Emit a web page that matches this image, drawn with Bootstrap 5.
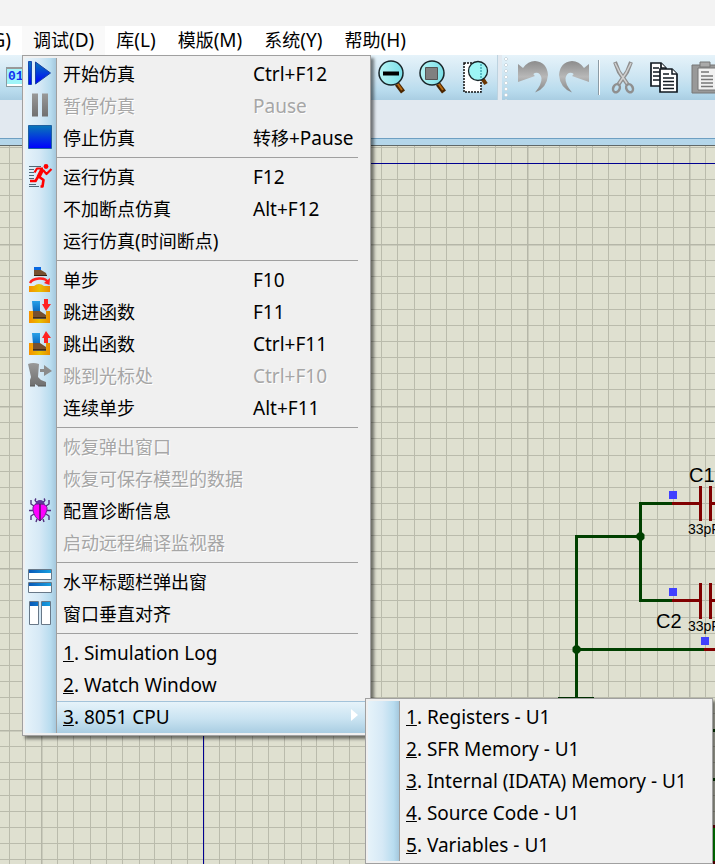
<!DOCTYPE html>
<html lang="zh-CN">
<head>
<meta charset="utf-8">
<meta name="viewport" content="width=device-width, initial-scale=1">
<title>调试</title>
<link href="https://cdn.jsdelivr.net/npm/bootstrap@5.3.0/dist/css/bootstrap.min.css" rel="stylesheet">
<style>
body{font-family:"Noto Sans","Noto Sans CJK SC",sans-serif;font-size:18px;line-height:32px;color:#000;background:#f3f3f3}
button{color:inherit;font:inherit;border:0;background:none;padding:0}
.latin{font-size:19px}
.app-title{height:26px}
.app-menubar{height:29px;background:#fff}
.menu-top{padding:0 11px;line-height:29px;white-space:nowrap}
.menu-top.open{background:#f9f9f9}
.menu-cut{width:22px;padding:0 11px 0 0}
.app-tools{height:45px;gap:4px;background:#e2e9f0}
.tool-strip{background:linear-gradient(#e6f3fa,#c9e3f1 55%,#b8dbed 80%,#a9cde2)}
.strip-main{flex:0 0 498px;padding-right:2px;border-right:1px solid #bdd3e0}
.strip-edit{min-width:0}
.tool{line-height:0;padding:4px 0 5px;flex:none}
.tool-bin{padding:0 0 2px 6px;line-height:0}
.grip{flex:none;width:4px;margin:0 4px 0 2px;background:radial-gradient(circle at 2px 2px,#fff 1px,#a9bfcc 2px,transparent 2px) 0 2px/4px 6px}
.tool-rule{flex:none;width:1px;margin:5px 4px;background:#8c9ba5;box-shadow:1px 0 #fff}
.dock{height:38px;background:#e2e9f0}
.splitter{height:8px;border-top:1px solid #6d9fc2;border-bottom:1px solid #606868;background:#b4d6ea}
.sheet{background:#dfe0d0;min-height:0}
.pop{position:absolute;z-index:5;background-color:#f0f0f0;border:1px solid #a0a0a0;box-shadow:3px 3px 3px rgba(0,0,0,.5);padding:2px}
.pop-main{left:22px;top:55px;width:349px}
.pop-sub{left:365px;top:698px;width:348px;z-index:6}
.pop-list{list-style:none;margin:0;padding:0;background:linear-gradient(90deg,#e6f3fa,#d6e9f6 45%,#b8dcef 80%,#a5c8dd 31px,#a0a0a0 31px) left/32px 100% no-repeat}
.pop-item{height:32px;width:100%;text-align:left}
.pop-icon{width:32px;height:32px;padding:0 0 0 3px;line-height:0;flex:none}
.pop-label{padding-left:6px;white-space:nowrap}
.pop-key{width:115px;flex:none}
.pop-item:disabled{color:#a6a6a6;text-shadow:1px 1px #fff}
.pop-rule{height:7px;margin:0 10px 0 32px;padding-top:3px}
.pop-rule::before{content:"";display:block;height:1px;background:#a0a0a0}
.pop-hot .pop-label{border-top:1px solid #a3c3da;background:linear-gradient(#e6f3fa,#c9e3f1 55%,#a9cde2);line-height:31px}
</style>
<script src="https://cdn.jsdelivr.net/npm/bootstrap@5.3.0/dist/js/bootstrap.bundle.min.js"></script>
</head>
<body class="vh-100 overflow-hidden d-flex flex-column position-relative">
<svg width="0" height="0" class="position-absolute" aria-hidden="true">
<defs>
<linearGradient id="blue" x2="0" y2="1"><stop stop-color="#0878b8"/><stop offset="1" stop-color="#0000ff"/></linearGradient>
<linearGradient id="grey" x2="0" y2="1"><stop stop-color="#999"/><stop offset="1" stop-color="#707070"/></linearGradient>
<linearGradient id="silver" x2="0" y2="1"><stop stop-color="#8c8c8c"/><stop offset=".5" stop-color="#b8b8b8"/><stop offset="1" stop-color="#858585"/></linearGradient>
<linearGradient id="lens"><stop stop-color="#b8f5f5"/><stop offset="1" stop-color="#7adfe8"/></linearGradient>
<linearGradient id="gold"><stop stop-color="#f79000"/><stop offset=".5" stop-color="#e8c000"/><stop offset="1" stop-color="#e88a00"/></linearGradient>
<linearGradient id="leg" x2="0" y2="1"><stop stop-color="#28a0e8"/><stop offset="1" stop-color="#0868c0"/></linearGradient>
<linearGradient id="capbar"><stop stop-color="#0858b8"/><stop offset="1" stop-color="#18a0e0"/></linearGradient>
</defs>
</svg>
<header class="app-title flex-shrink-0"></header>
<nav class="app-menubar d-flex flex-shrink-0" aria-label="菜单栏">
<button class="menu-top menu-cut d-flex justify-content-end overflow-hidden"><span class="latin">(G)</span></button>
<button class="menu-top open">调试<span class="latin">(D)</span></button>
<button class="menu-top">库<span class="latin">(L)</span></button>
<button class="menu-top">模版<span class="latin">(M)</span></button>
<button class="menu-top">系统<span class="latin">(Y)</span></button>
<button class="menu-top">帮助<span class="latin">(H)</span></button>
</nav>
<div class="app-tools d-flex flex-shrink-0 overflow-hidden">
<div class="tool-strip strip-main d-flex">
<button class="tool-bin" aria-label="01"><svg width="30" height="24"><rect x=".5" y="2.500" width="29" height="19" fill="#fff" stroke="#8a9aa0"/><path d="M1 4h28v15H1z" fill="#9ff4f8"/><path d="M1 3h28" stroke="#999" stroke-width="2"/><text x="2" y="15" font-family="Liberation Mono" font-weight="700" font-size="13" fill="#1030f0">01</text></svg></button>
<button class="tool ms-auto" aria-label="缩小"><svg width="41" height="36"><path d="M25 25l6 8" stroke="#4a2500" stroke-width="5"/><path d="M25 24l5 7" stroke="#b86a10" stroke-width="2"/><circle cx="19" cy="14" r="12" fill="url(#lens)" stroke="#182428" stroke-width="1.500"/><path d="M11 14.500h16" stroke="#000" stroke-width="4"/></svg></button>
<button class="tool" aria-label="适合"><svg width="41" height="36"><path d="M25 25l6 8" stroke="#4a2500" stroke-width="5"/><path d="M25 24l5 7" stroke="#b86a10" stroke-width="2"/><circle cx="19" cy="14" r="12" fill="url(#lens)" stroke="#182428" stroke-width="1.500"/><path d="M12.500 8.500h12v12h-12z" fill="#808080" stroke="#555"/></svg></button>
<button class="tool" aria-label="区域"><svg width="41" height="36"><path d="M10 4h17v29H10z" fill="#fff" stroke="#111" stroke-width="1.500" stroke-dasharray="2 1"/><path d="M28 19l4 6" stroke="#6a3500" stroke-width="4"/><circle cx="24" cy="12" r="9.500" fill="#9df5f5" stroke="#182428" stroke-width="1.300"/><path d="M27 5v15" stroke="#178898" stroke-dasharray="2 1"/></svg></button>
</div>
<div class="tool-strip strip-edit d-flex flex-grow-1 overflow-hidden">
<span class="grip"></span>
<button class="tool" aria-label="撤销"><svg width="41" height="36"><path d="M6 5L11 9Q16 2 23 2Q35 3 36 16Q35 29 23 33.500Q30 25 29.500 19Q28 13 23 14Q20 15 23 17L6 23Z" fill="url(#silver)"/></svg></button>
<button class="tool" aria-label="重做"><svg width="41" height="36"><path transform="translate(42 0) scale(-1 1)" d="M6 5L11 9Q16 2 23 2Q35 3 36 16Q35 29 23 33.500Q30 25 29.500 19Q28 13 23 14Q20 15 23 17L6 23Z" fill="url(#silver)"/></svg></button>
<span class="tool-rule"></span>
<button class="tool" aria-label="剪切"><svg width="41" height="36"><g fill="none" stroke="#8f8f8f"><path d="M12 3l4 10 9 13M28 3l-4 10-9 13" stroke-width="4"/><path d="M12 4l5 10 8 12M28 4l-5 10-8 12" stroke="#d0d0d0" stroke-width="1.500"/><ellipse cx="13.500" cy="29" rx="3.200" ry="4.200" stroke-width="2.500" transform="rotate(25 13 29)"/><ellipse cx="26.500" cy="29" rx="3.200" ry="4.200" stroke-width="2.500" transform="rotate(-25 27 29)"/></g></svg></button>
<button class="tool" aria-label="复制"><svg width="41" height="36"><g fill="#fff" stroke="#101820" stroke-width="1.700"><path d="M7 4h10l5 5v18H7z"/><path d="M17 4v5h5M9 9h6M9 13h8M9 17h8M9 21h8" /><path d="M16 10h12l5 5v18H16z"/><path d="M28 10v5h5M19 15h6M19 19h11M19 22.500h11M19 26h11M19 29.500h11" stroke-width="1.500"/></g></svg></button>
<button class="tool" aria-label="粘贴"><svg width="41" height="36"><path d="M7 6h27v28H7z" fill="#999" stroke="#777"/><path d="M15 3h10v5H15z" fill="#aaa" stroke="#777"/><path d="M13 9h20v22H13z" fill="#f1f1f1" stroke="#777"/><path d="M16 13h8M16 17h12M16 20.500h12M16 24h12M16 27.500h12" stroke="#777" stroke-width="1.500"/></svg></button>
</div>
</div>
<div class="dock flex-shrink-0"></div>
<div class="splitter flex-shrink-0"></div>
<main class="sheet flex-grow-1 overflow-hidden">
<svg width="100%" height="100%" class="d-block" role="img" aria-label="原理图">
<defs><pattern id="grid" x="41" y="82" width="162" height="162" patternUnits="userSpaceOnUse">
<path d="M16.500 0v162M32.500 0v162M49.500 0v162M65.500 0v162M81.500 0v162M98.500 0v162M113.500 0v162M130.500 0v162M146.500 0v162M0 16.500h162M0 32.500h162M0 49.500h162M0 65.500h162M0 81.500h162M0 97.500h162M0 113.500h162M0 129.500h162M0 145.500h162" stroke="#babbac"/>
<path d="M0 0h162v1.500H1.500V162H0z" fill="#b5b6a8"/>
</pattern></defs>
<g transform="translate(0 -146)">
<rect width="4000" height="4000" fill="url(#grid)"/>
<path d="M4000 163.500H203.500V4000" fill="none" stroke="#000090"/>
<g fill="none" stroke-width="3">
<path d="M576.500 697V536.500H640.500M672 503.500H640.500V600.500H672M576.500 649.500H704M712 730.500h20M712 779.500h20" stroke="#004000"/>
<path d="M672 503.500h28M710 503.500h30M672 600.500h28M710 600.500h30M704 649.500h40M700.500 486v35M710.500 486v35M700.500 583v36M710.500 583v36" stroke="#800000"/>
</g>
<path d="M558 697.500h36" stroke="#003000"/>
<path d="M636.500 534.500l2-2h4l2 2v4l-2 2h-4l-2-2zM572.500 647.500l2-2h4l2 2v4l-2 2h-4l-2-2z" fill="#004000"/>
<path d="M669 491h8v8h-8zM669 588h8v8h-8zM701 637h8v8h-8z" fill="#4040ff"/>
<path d="M712 825h30v39h-30z" fill="#800000"/><path d="M712 828h30v33h-30z" fill="#00b000"/>
<g font-family="Liberation Sans,sans-serif" fill="#000"><text x="689" y="482" font-size="20">C1</text><text x="656" y="628" font-size="20">C2</text><text x="688" y="534" font-size="14">33pF</text><text x="688" y="631" font-size="14">33pF</text></g>
</g>
</svg>
</main>

<div class="pop pop-main">
<ul class="pop-list">
<li><button class="pop-item d-flex"><span class="pop-icon"><svg width="28" height="32"><path d="M.5 3.500h3v23h-3z" fill="url(#blue)" stroke="#1848b0"/><path d="M7.500 4v22l15-11z" fill="url(#blue)" stroke="#1840a0"/></svg></span><span class="pop-label flex-grow-1">开始仿真</span><span class="pop-key latin">Ctrl+F12</span></button></li>
<li><button class="pop-item d-flex" disabled><span class="pop-icon"><svg width="28" height="32"><path d="M4 3.500h6v23H4zM14 3.500h6v23h-6z" fill="url(#grey)"/></svg></span><span class="pop-label flex-grow-1">暂停仿真</span><span class="pop-key latin">Pause</span></button></li>
<li><button class="pop-item d-flex"><span class="pop-icon"><svg width="28" height="32"><path d="M.5 3.500h23v23H.5z" fill="url(#blue)" stroke="#2060a0"/></svg></span><span class="pop-label flex-grow-1">停止仿真</span><span class="pop-key">转移<span class="latin">+Pause</span></span></button></li>
<li class="pop-rule"></li>
<li><button class="pop-item d-flex"><span class="pop-icon"><svg width="28" height="32"><path d="M1 5.500h12M1 8.500h5M1 11.500h5M1 14.500h5M1 17.500h5M1 23.500h7M1 25.500h10" stroke="#506878" stroke-width="1.200"/><g fill="none" stroke="#f00" stroke-linejoin="round"><path d="M14.500 8l-4 8" stroke-width="4"/><path d="M15 7.500H9l-2.500 4M15 9l3.500 4 5-5" stroke-width="2.200"/><path d="M10.500 15l-3 5H2M10 15l5.500 4-1 6.500h-2" stroke-width="2.600"/></g><circle cx="18" cy="5.500" r="2.400" fill="#f00"/></svg></span><span class="pop-label flex-grow-1">运行仿真</span><span class="pop-key latin">F12</span></button></li>
<li><button class="pop-item d-flex"><span class="pop-icon"></span><span class="pop-label flex-grow-1">不加断点仿真</span><span class="pop-key latin">Alt+F12</span></button></li>
<li><button class="pop-item d-flex"><span class="pop-icon"></span><span class="pop-label flex-grow-1">运行仿真<span class="latin">(</span>时间断点<span class="latin">)</span></span></button></li>
<li class="pop-rule"></li>
<li><button class="pop-item d-flex"><span class="pop-icon"><svg width="28" height="32"><path d="M6 3h7v3H6z" fill="#0868e0"/><path d="M6 6h7l5 3 1 3H6z" fill="#765030"/><path d="M6 11.500h13" stroke="#302010"/><path d="M2 19q2-4 9-4.500t9 4" fill="none" stroke="#f22" stroke-width="2.500"/><path d="M22 14l-.5 7-5.500-2z" fill="#f22"/><path d="M1 22h5q5-4 10 0h6v6H1z" fill="url(#gold)"/></svg></span><span class="pop-label flex-grow-1">单步</span><span class="pop-key latin">F10</span></button></li>
<li><button class="pop-item d-flex"><span class="pop-icon"><svg width="28" height="32"><path d="M1 15h4v8h13v-8h4v12H1z" fill="url(#gold)"/><path d="M4 5h8v11H5z" fill="url(#leg)"/><path d="M5 15h7l6 4v3H5z" fill="#765030"/><path d="M5 22h13" stroke="#302010" stroke-width="1.500"/><path d="M16 3h4v5h3l-5 7-4-7h2z" fill="#f22"/></svg></span><span class="pop-label flex-grow-1">跳进函数</span><span class="pop-key latin">F11</span></button></li>
<li><button class="pop-item d-flex"><span class="pop-icon"><svg width="28" height="32"><path d="M1 15h4v8h13v-8h4v12H1z" fill="url(#gold)"/><path d="M4 5h8v11H5z" fill="url(#leg)"/><path d="M5 15h7l6 4v3H5z" fill="#765030"/><path d="M5 22h13" stroke="#302010" stroke-width="1.500"/><path d="M16 15h4v-5h3l-5-7-4 7h2z" fill="#f22"/></svg></span><span class="pop-label flex-grow-1">跳出函数</span><span class="pop-key latin">Ctrl+F11</span></button></li>
<li><button class="pop-item d-flex" disabled><span class="pop-icon"><svg width="28" height="32"><path d="M0 4q5-2 11 0l-1 13 3 3 5 2v4h-8l-3-2v2H2v-6l1-3z" fill="url(#grey)"/><path d="M2 26h5M10 26h8" stroke="#555"/><path d="M12 9h4V5l8 6-8 5v-4h-4z" fill="#8b8b8b"/></svg></span><span class="pop-label flex-grow-1">跳到光标处</span><span class="pop-key latin">Ctrl+F10</span></button></li>
<li><button class="pop-item d-flex"><span class="pop-icon"></span><span class="pop-label flex-grow-1">连续单步</span><span class="pop-key latin">Alt+F11</span></button></li>
<li class="pop-rule"></li>
<li><button class="pop-item d-flex" disabled><span class="pop-icon"></span><span class="pop-label flex-grow-1">恢复弹出窗口</span></button></li>
<li><button class="pop-item d-flex" disabled><span class="pop-icon"></span><span class="pop-label flex-grow-1">恢复可保存模型的数据</span></button></li>
<li><button class="pop-item d-flex"><span class="pop-icon"><svg width="28" height="32"><g fill="none" stroke="#503080" stroke-width="1.400"><path d="M9 7Q6 6 8 3.500M15 7q3-1 1-3.500M6 11L3 9V5M18 11l3-2V5M5 15.500H1M19 15.500h4M6 19l-3 2v4M18 19l3 2v4M9 24l-1 3M15 24l1 3"/></g><path d="M7 10Q8 5 12 5t5 5z" fill="#60389a"/><path d="M12 9q8 0 7 6t-7 11q-6-4-7-11t7-6z" fill="#f0f" stroke="#702090"/><path d="M12 9v17" stroke="#501060" stroke-width="1.500"/></svg></span><span class="pop-label flex-grow-1">配置诊断信息</span></button></li>
<li><button class="pop-item d-flex" disabled><span class="pop-icon"></span><span class="pop-label flex-grow-1">启动远程编译监视器</span></button></li>
<li class="pop-rule"></li>
<li><button class="pop-item d-flex"><span class="pop-icon"><svg width="28" height="32"><path d="M.5 3.500h23v10H.5zM.5 16.500h23v10H.5z" fill="#fff" stroke="#687888"/><path d="M1 4h22v3H1zM1 17h22v3H1z" fill="url(#capbar)"/></svg></span><span class="pop-label flex-grow-1">水平标题栏弹出窗</span></button></li>
<li><button class="pop-item d-flex"><span class="pop-icon"><svg width="28" height="32"><path d="M1.500 3.500h9v23h-9zM13.500 3.500h9v23h-9z" fill="#fff" stroke="#687888"/><path d="M2 4h8v4H2zM14 4h8v4h-8z" fill="url(#capbar)"/></svg></span><span class="pop-label flex-grow-1">窗口垂直对齐</span></button></li>
<li class="pop-rule"></li>
<li><button class="pop-item d-flex latin"><span class="pop-icon"></span><span class="pop-label flex-grow-1"><u>1</u>. Simulation Log</span></button></li>
<li><button class="pop-item d-flex latin"><span class="pop-icon"></span><span class="pop-label flex-grow-1"><u>2</u>. Watch Window</span></button></li>
<li><button class="pop-item pop-hot d-flex latin" aria-expanded="true"><span class="pop-icon"></span><span class="pop-label d-flex flex-grow-1"><span><u>3</u>. 8051 CPU</span><svg class="ms-auto me-2" width="10" height="30" aria-hidden="true"><path d="M1 7v12l7-6z" fill="#fff"/></svg></span></button></li>
</ul>
</div>
<div class="pop pop-sub">
<ul class="pop-list latin">
<li><button class="pop-item d-flex"><span class="pop-icon"></span><span class="pop-label"><u>1</u>. Registers - U1</span></button></li>
<li><button class="pop-item d-flex"><span class="pop-icon"></span><span class="pop-label"><u>2</u>. SFR Memory - U1</span></button></li>
<li><button class="pop-item d-flex"><span class="pop-icon"></span><span class="pop-label"><u>3</u>. Internal (IDATA) Memory - U1</span></button></li>
<li><button class="pop-item d-flex"><span class="pop-icon"></span><span class="pop-label"><u>4</u>. Source Code - U1</span></button></li>
<li><button class="pop-item d-flex"><span class="pop-icon"></span><span class="pop-label"><u>5</u>. Variables - U1</span></button></li>
</ul>
</div>
</body>
</html>
